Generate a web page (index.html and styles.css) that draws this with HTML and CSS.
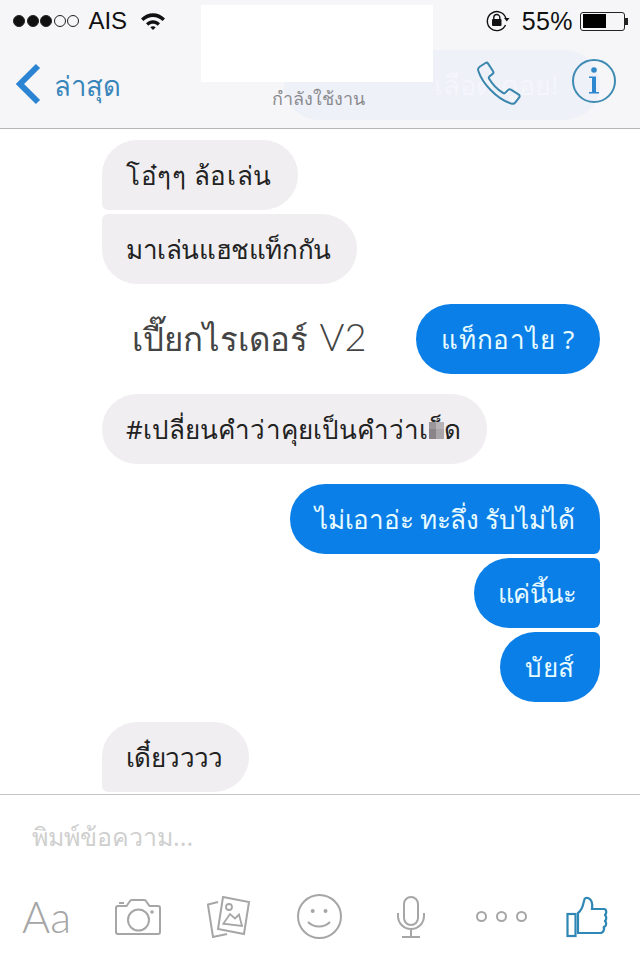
FILE: index.html
```html
<!DOCTYPE html>
<html lang="th">
<head>
<meta charset="utf-8">
<title>Chat</title>
<link rel="stylesheet" href="styles.css">
</head>
<body>
<div class="phone">
  <header class="top">
    <div class="ghost"><span class="ghost-text">เลือด ดูอย!</span></div>
    <div class="status">
      <div class="status-left">
        <span class="signal"><i class="on"></i><i class="on"></i><i class="on"></i><i></i><i></i></span>
        <span class="carrier">AIS</span>
        <svg class="wifi" width="26" height="18" viewBox="0 0 26 18"><path d="M1 6.500C8-.5 18-.5 25 6.500l-2.400 2.600C16.800 3.600 9.200 3.600 3.400 9.100Z" fill="#111"/><path d="M6 11.300c4.200-4 9.800-4 14 0l-2.300 2.400c-2.800-2.500-6.600-2.500-9.400 0Z" fill="#111"/><path d="M10.300 15.300c1.600-1.300 3.800-1.300 5.400 0L13 18Z" fill="#111"/></svg>
      </div>
      <div class="status-right">
        <svg class="lock" width="24" height="22" viewBox="0 0 24 22"><path d="M19.500 15A9.500 9.500 0 1 1 19.800 8" fill="none" stroke="#111" stroke-width="1.400"/><path d="M18 8h5.500l-2.700 3.500Z" fill="#111"/><rect x="6" y="9" width="9.500" height="7" rx="1" fill="#111"/><path d="M7.800 9.500V7.500a3 3 0 0 1 6 0v2" fill="none" stroke="#111" stroke-width="1.400"/></svg>
        <span class="pct">55%</span>
        <span class="battery"><span class="battery-fill"></span></span><span class="nub"></span>
      </div>
    </div>
    <div class="nav">
      <div class="back">
        <svg width="28" height="42" viewBox="0 0 28 42"><path d="M24 3 6 21l18 18" fill="none" stroke="#2b84d2" stroke-width="6"/></svg>
        <span class="back-label">ล่าสุด</span>
      </div>
      <div class="title">กำลังใช้งาน</div>
      <div class="actions">
        <svg width="46" height="46" viewBox="0 0 46 46"><path d="M4 5.500 9.500 2c1-.6 2-.3 2.600.6l5 7.600c.6 1 .4 2-.5 2.700l-3.200 2.600c-.6.500-.8 1.200-.4 1.900 3 5.300 8.500 11 14.300 14.700.7.400 1.400.3 1.900-.2l3-3c.8-.8 1.900-.9 2.800-.2l7.800 5c1 .6 1.100 1.800.4 2.700l-3.800 5c-1 1.300-2.600 1.700-4.100 1.200C20.500 38 6 22 2.200 9.500 1.800 8 2.600 6.400 4 5.500Z" fill="none" stroke="#3a86ad" stroke-width="2"/></svg>
        <svg class="info" width="46" height="46" viewBox="0 0 46 46"><circle cx="23" cy="23" r="21" fill="none" stroke="#3f8bb3" stroke-width="2"/><circle cx="23" cy="12" r="2.800" fill="#3188c8"/><path d="M18 18.500h7V34h3v1.500H18V34h3V20h-3Z" fill="#2d86d0"/></svg>
      </div>
    </div>
    <div class="censor"></div>
  </header>

  <main class="chat">
    <div class="bubble in wide top-of-group">โอ๋ๆๆ ล้อเล่น</div>
    <div class="bubble in snug bottom-of-group">มาเล่นแฮชแท็กกัน</div>
    <div class="mixed">
      <span class="plain">เปี๊ยกไรเดอร์ <span class="latin">V2</span></span>
      <div class="bubble out wider">แท็กอาไย ?</div>
    </div>
    <div class="bubble in slight">#เปลี่ยนคำว่าคุยเป็นคำว่าเ<span class="mosaic"></span>็ด</div>
    <div class="out-group">
      <div class="bubble out first tight">ไม่เอาอ่ะ ทะลึ่ง รับไม่ได้</div>
      <div class="bubble out mid tighter short">แค่นี้นะ</div>
      <div class="bubble out last wide">บัยส์</div>
    </div>
    <div class="bubble in tail tighter">เดี๋ยวววว</div>
  </main>

  <footer class="composer">
    <div class="placeholder">พิมพ์ข้อความ...</div>
    <div class="tools">
      <span class="aa">Aa</span>
      <svg width="46" height="36" viewBox="0 0 46 36"><path d="M3 7h8.500l3.500-5c.5-.7 1-1 2-1h12c1 0 1.500.3 2 1l3.500 5H43c1.200 0 2 .8 2 2v24c0 1.200-.8 2-2 2H3c-1.200 0-2-.8-2-2V9c0-1.200.8-2 2-2Z" fill="none" stroke="#a6a6a6" stroke-width="2"/><circle cx="23.500" cy="21" r="10.500" fill="none" stroke="#a6a6a6" stroke-width="2"/><circle cx="37" cy="13" r="1.800" fill="#a6a6a6"/><path d="M4 4h5" stroke="#a6a6a6" stroke-width="2"/></svg>
      <svg width="44" height="42" viewBox="0 0 44 42"><path d="M11 6 .9 8.500 6 41l14-3" fill="none" stroke="#a6a6a6" stroke-width="2"/><path d="m16 1 26 5-5 32-26-5Z" fill="none" stroke="#a6a6a6" stroke-width="2"/><circle cx="22" cy="11" r="3" fill="none" stroke="#a6a6a6" stroke-width="1.800"/><path d="m16.300 27.700 6.700-9.700 5 4.500 4-4 3 11.500Z" fill="none" stroke="#a6a6a6" stroke-width="1.800"/></svg>
      <svg width="45" height="45" viewBox="0 0 45 45"><circle cx="22.500" cy="22.500" r="21.500" fill="none" stroke="#a6a6a6" stroke-width="2"/><circle cx="15.700" cy="17" r="2" fill="#a6a6a6"/><circle cx="28.500" cy="17" r="2" fill="#a6a6a6"/><path d="M11 28c6 6 16 6 22 0" fill="none" stroke="#a6a6a6" stroke-width="2"/></svg>
      <svg width="28" height="42" viewBox="0 0 28 42"><rect x="7" y="1" width="14" height="28" rx="7" fill="none" stroke="#a6a6a6" stroke-width="2"/><path d="M1 17v3a13 13 0 0 0 26 0v-3M14 33v8M5 41h18" fill="none" stroke="#a6a6a6" stroke-width="2"/></svg>
      <span class="more"><i></i><i></i><i></i></span>
      <svg width="42" height="42" viewBox="0 0 42 42"><rect x="1.500" y="18" width="8" height="22" fill="none" stroke="#2f87b5" stroke-width="2.200"/><path d="M12 37V17c3-2 5-7 6-12 .5-3 2-3.500 4-3 3 1 5 4 4 11h12c3 0 3 6 0 6 3 0 3 6 0 6 3 0 3 6-1 6 2 1 1 6-3 6Z" fill="none" stroke="#2f87b5" stroke-width="2.200"/></svg>
    </div>
  </footer>
</div>
</body>
</html>
```
FILE: styles.css
```css
* { box-sizing: border-box; }
html, body { margin: 0; padding: 0; }
body { background: #fff; font-family: "Noto Sans", "Liberation Sans", "DejaVu Sans", sans-serif; }
.phone { width: 640px; height: 960px; display: flex; flex-direction: column; overflow: hidden; position: relative; }

.top { height: 129px; background: #f6f6f8; border-bottom: 1px solid #b5b5b5; display: flex; flex-direction: column; position: relative; overflow: hidden; }
.ghost { position: absolute; left: 284px; top: 50px; width: 316px; height: 70px; border-radius: 35px; background: #eef1f8; line-height: 70px; padding-left: 150px; }
.ghost-text { font-size: 27px; color: #f4f6fb; white-space: nowrap; }
.status { height: 42px; display: flex; justify-content: space-between; align-items: center; padding: 0 12px 0 13px; color: #111; position: relative; }
.status-left, .status-right { display: flex; align-items: center; }
.signal { display: flex; gap: 1.600px; }
.signal i { width: 12px; height: 12px; border-radius: 50%; border: 1px solid #222; }
.signal i.on { background: #111; }
.carrier { font-family: "Liberation Sans", sans-serif; font-size: 24px; margin-left: 9px; }
.wifi { margin-left: 13px; }
.pct { font-family: "Liberation Sans", sans-serif; font-size: 25px; margin-left: 12px; letter-spacing: .4px; }
.battery { width: 45px; height: 19px; border: 1.500px solid #222; border-radius: 3px; margin-left: 7px; padding: 1.500px; display: flex; }
.battery-fill { width: 23px; background: #000; }
.nub { width: 3px; height: 7px; background: #222; }

.nav { flex: 1; display: flex; align-items: center; justify-content: space-between; padding: 0 23px 2px 14px; position: relative; }
.back { display: flex; align-items: center; gap: 12px; }
.back-label { font-size: 27.500px; font-weight: 500; color: #3a86bb; position: relative; top: 2px; }
.title { position: absolute; left: 0; right: 4px; bottom: 15px; text-align: center; font-size: 18px; color: #8b8b8f; }
.actions { display: flex; gap: 49px; align-items: center; }
.info { margin-top: -6px; }
.censor { position: absolute; left: 201px; top: 5px; width: 232px; height: 77px; background: #fff; }

.chat { height: 665px; display: flex; flex-direction: column; padding: 11px 40px 0 102px; position: relative; }
.bubble { height: 70px; line-height: 70px; border-radius: 35px; padding: 0 25px; font-size: 26px; white-space: nowrap; width: fit-content; }
.bubble.in { background: #f0eef0; color: #222; margin-bottom: 4px; padding: 0 26px 0 24px; }
.bubble.out { background: #0a7fe8; color: #e8fbff; margin-left: auto; }
.wider { letter-spacing: .75px; }
.wide { letter-spacing: .6px; }
.slight { letter-spacing: .1px; }
.tight { letter-spacing: -.25px; }
.snug { letter-spacing: -.4px; }
.tighter { letter-spacing: -.6px; }
.bubble.short { font-size: 25.500px; padding: 0 24px; }
.top-of-group { border-bottom-left-radius: 6px; }
.bottom-of-group { border-top-left-radius: 6px; }
.mixed { display: flex; align-items: center; justify-content: space-between; height: 70px; margin: 16px 0 20px; padding-left: 30px; }
.plain { font-size: 33px; font-weight: 300; color: #444; }
.latin { font-family: "Lato", sans-serif; font-weight: 300; font-size: 38px; margin-left: 3px; }
.out-group { display: flex; flex-direction: column; gap: 4px; margin: 16px 0 20px; }
.bubble.first { border-radius: 35px 35px 6px 35px; }
.bubble.mid { border-radius: 35px 6px 6px 35px; }
.bubble.last { border-radius: 35px 6px 35px 35px; }
.bubble.tail { margin-bottom: 0; border-bottom-left-radius: 6px; }
.mosaic { display: inline-block; width: 15px; height: 17px; background: linear-gradient(180deg, rgba(255,255,255,.15) 40%, rgba(0,0,0,0) 40%), linear-gradient(90deg, #8a8488 50%, #a9a5a8 50%); vertical-align: 0; }

.composer { flex: 1; border-top: 1px solid #c4c4c4; display: flex; flex-direction: column; background: #fff; }
.placeholder { font-size: 25px; color: #cfcfcf; padding: 22px 0 0 32px; height: 99px; }
.tools { display: grid; grid-template-columns: repeat(6, 91px) 80px; justify-items: center; align-items: center; padding-left: 1px; height: 44px; }
.aa { font-family: "Lato", sans-serif; font-weight: 300; font-size: 43px; color: #a6a6a6; line-height: 44px; }
.more { display: flex; gap: 9px; }
.more i { width: 11px; height: 11px; border: 2px solid #a6a6a6; border-radius: 50%; }
```
